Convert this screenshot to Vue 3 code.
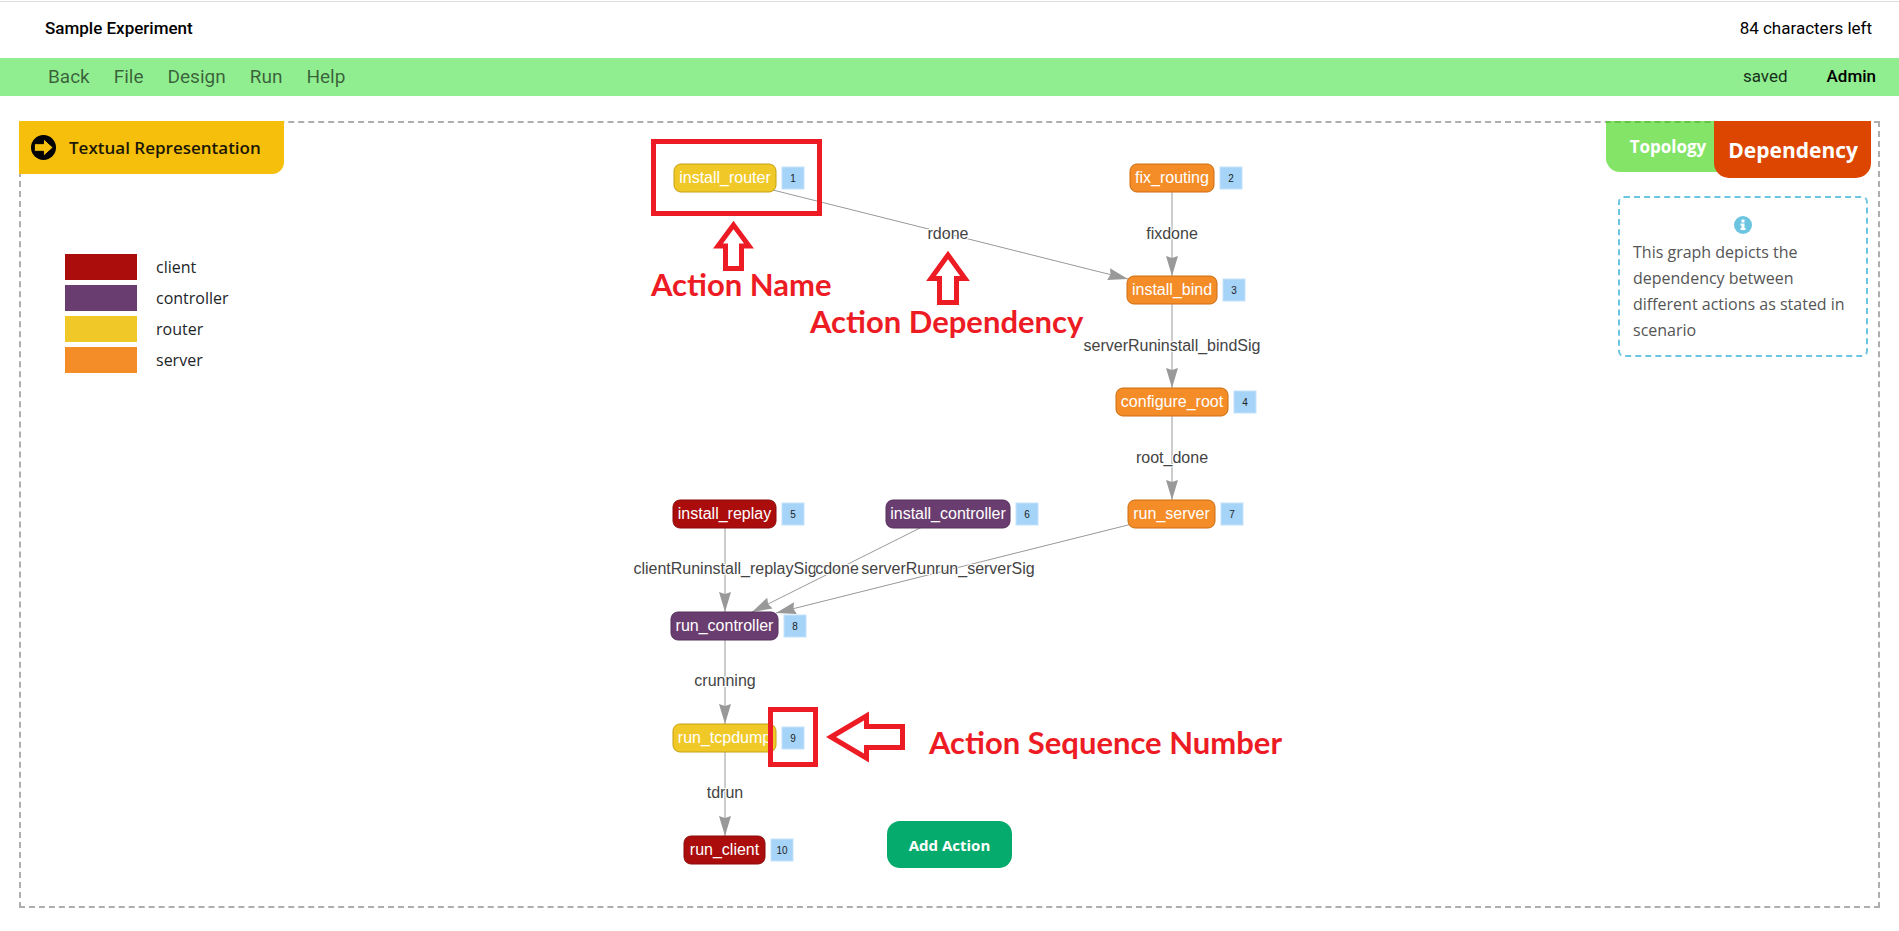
<script setup>
import { ref } from 'vue'

const title = ref('Sample Experiment')
const menu = ['Back', 'File', 'Design', 'Run', 'Help']

const roles = ['client', 'controller', 'router', 'server']

// Graph coordinates: x is the left edge of a node, row its level in the hierarchy.
const nodes = [
  { id: 1, name: 'install_router', role: 'router', x: 674, w: 102, row: 0 },
  { id: 2, name: 'fix_routing', role: 'server', x: 1130, w: 84, row: 0 },
  { id: 3, name: 'install_bind', role: 'server', x: 1127, w: 90, row: 1 },
  { id: 4, name: 'configure_root', role: 'server', x: 1116, w: 112, row: 2 },
  { id: 5, name: 'install_replay', role: 'client', x: 673, w: 103, row: 3 },
  { id: 6, name: 'install_controller', role: 'controller', x: 886, w: 124, row: 3 },
  { id: 7, name: 'run_server', role: 'server', x: 1128, w: 87, row: 3 },
  { id: 8, name: 'run_controller', role: 'controller', x: 671, w: 107, row: 4 },
  { id: 9, name: 'run_tcpdump', role: 'router', x: 673, w: 103, row: 5 },
  { id: 10, name: 'run_client', role: 'client', x: 684, w: 81, row: 6 },
]
const top = (row) => 164 + row * 112

const edges = [
  { from: [725, 178], to: [1128, 279], label: 'rdone', at: [948, 239] },
  { from: [1172, 178], to: [1172, 276], label: 'fixdone', at: [1172, 239] },
  { from: [1172, 290], to: [1172, 388], label: 'serverRuninstall_bindSig', at: [1172, 351] },
  { from: [1172, 402], to: [1172, 500], label: 'root_done', at: [1172, 463] },
  { from: [725, 514], to: [725, 612], label: 'clientRuninstall_replaySig', at: [725, 574] },
  { from: [948, 514], to: [752, 612], label: 'cdone', at: [837, 574] },
  { from: [1172, 514], to: [776, 613], label: 'serverRunrun_serverSig', at: [948, 574] },
  { from: [725, 626], to: [725, 724], label: 'crunning', at: [725, 686] },
  { from: [725, 738], to: [725, 836], label: 'tdrun', at: [725, 798] },
]
</script>

<template>
  <div class="page">
    <header class="top">
      <input v-model="title" class="title" aria-label="Experiment name" />
      <span class="left-count">84 characters left</span>
    </header>

    <nav class="menu">
      <a v-for="item in menu" :key="item" href="#" class="menu-link">{{ item }}</a>
      <span class="saved">saved</span>
      <a href="#" class="admin">Admin</a>
    </nav>

    <main class="panel">
      <section class="side">
        <button type="button" class="textual">
          <svg class="textual-icon" viewBox="0 0 26 26" aria-hidden="true">
            <circle cx="13" cy="13" r="13" />
            <path d="M3.500 9h9.500V4l10 9-10 9v-5H3.500z" />
          </svg>
          Textual Representation
        </button>
        <ul class="legend">
          <li v-for="role in roles" :key="role">
            <span class="swatch" :class="role"></span>{{ role }}
          </li>
        </ul>
      </section>

      <section class="canvas">
        <svg class="graph" viewBox="600 123 699 783" role="img" aria-label="Action dependency graph">
          <defs>
            <marker id="tip" markerUnits="userSpaceOnUse" markerWidth="22" markerHeight="14" refX="20" refY="7" orient="auto">
              <path d="M20 7L0 1l2 6-2 6z" fill="#999" />
            </marker>
          </defs>

          <line
            v-for="e in edges" :key="e.label" class="edge" marker-end="url(#tip)"
            :x1="e.from[0]" :y1="e.from[1]" :x2="e.to[0]" :y2="e.to[1]"
          />
          <text v-for="e in edges" :key="e.label" class="edge-label" :x="e.at[0]" :y="e.at[1]">{{ e.label }}</text>

          <g v-for="n in nodes" :key="n.id" :class="n.role">
            <rect class="node" :x="n.x" :y="top(n.row)" :width="n.w" height="28" rx="7" />
            <text class="node-label" :x="n.x + n.w / 2" :y="top(n.row) + 19">{{ n.name }}</text>
            <rect class="badge" :x="n.x + n.w + 6" :y="top(n.row) + 3" width="22" height="22" />
            <text class="badge-label" :x="n.x + n.w + 17" :y="top(n.row) + 18">{{ n.id }}</text>
          </g>

          <g class="marks">
            <path d="M653.5 141.5h166v72h-166z" />
            <path d="M770.5 709.5h45v55h-45z" />
            <path d="M733.5 225L749 246h-7.500v22.500h-16V246H718z" />
            <path d="M948 255l17 23.500h-8.500v24h-17v-24H931z" />
            <path d="M831 737l35.500-21v10.500h36v21h-36V758z" />
          </g>
          <text class="note" x="651" y="296">Action Name</text>
          <text class="note" x="810" y="333">Action Dependency</text>
          <text class="note" x="929" y="754">Action Sequence Number</text>
        </svg>
        <button type="button" class="add">Add Action</button>
      </section>

      <aside class="side right">
        <div class="tabs">
          <button type="button" class="tab">Topology</button>
          <button type="button" class="tab active">Dependency</button>
        </div>
        <div class="info">
          <svg class="info-icon" viewBox="0 0 18 18" aria-hidden="true">
            <circle cx="9" cy="9" r="9" fill="#6bc5e0" />
            <path d="M7.500 3.500h3v3h-3zM6.500 7.500h4v4.500h1v2h-5v-2h1V9.500h-1z" fill="#fff" />
          </svg>
          <p>This graph depicts the dependency between different actions as stated in scenario</p>
        </div>
      </aside>
    </main>
  </div>
</template>

<style>
body {
  background: #fff;
}
</style>

<style scoped>
.page {
  box-sizing: border-box;
  padding-top: 1px;
  font-family: 'Open Sans', 'Noto Sans', sans-serif;
}
button {
  border: 0;
  font-family: inherit;
  cursor: pointer;
}
.top {
  display: flex;
  align-items: center;
  justify-content: space-between;
  height: 56px;
  padding: 0 27px 0 45px;
  border-top: 1px solid #dcdcdc;
  font: 17px Roboto, sans-serif;
  color: #000;
}
.left-count,
.title {
  padding: 0 0 4px;
}
.title {
  width: 400px;
  border: 0;
  outline: 0;
  background: none;
  font: 500 17px Roboto, sans-serif;
  color: #000;
}
.menu {
  box-sizing: border-box;
  display: flex;
  align-items: center;
  gap: 24px;
  height: 38px;
  padding: 0 23px 2px 48px;
  background: #90ee90;
  font: 19px Roboto, sans-serif;
}
.menu-link {
  color: rgba(0, 0, 0, 0.6);
  text-decoration: none;
}
.saved {
  margin-left: auto;
  margin-right: 15px;
  font-size: 17px;
  color: #17301a;
}
.admin {
  font-size: 17px;
  font-weight: 500;
  color: #000;
  text-decoration: none;
}
.panel {
  display: grid;
  grid-template-columns: 1fr 699px 1fr;
  margin: 25px 19px 0;
  border: 2px dashed #aeaeae;
}
.textual {
  display: flex;
  align-items: center;
  gap: 13px;
  height: 53px;
  margin: -2px 0 0 -2px;
  padding: 0 23px 0 12px;
  border-radius: 0 0 12px 0;
  background: #f5bf0b;
  font-size: 17px;
  font-weight: 600;
  color: #1c1705;
}
.textual-icon {
  width: 25px;
  height: 25px;
}
.textual-icon path {
  fill: #f5bf0b;
  stroke: #000;
}
.legend {
  display: grid;
  gap: 5px;
  margin: 80px 0 0 44px;
  padding: 0;
  list-style: none;
  font-size: 16px;
  color: #212529;
}
.legend li {
  display: flex;
  align-items: center;
  gap: 19px;
  height: 26px;
}
.swatch {
  width: 72px;
  height: 26px;
  background: var(--fill);
}
.client {
  --fill: #ab0d0d;
  --line: #8c0a0a;
}
.controller {
  --fill: #6a3d70;
  --line: #55305a;
}
.router {
  --fill: #f0c929;
  --line: #c4a010;
}
.server {
  --fill: #f48c28;
  --line: #cc6c10;
}
.canvas {
  display: grid;
  justify-items: center;
}
.graph,
.add {
  grid-area: 1 / 1;
}
.graph {
  display: block;
  width: 699px;
  height: 783px;
}
.edge {
  stroke: #999;
  stroke-width: 1px;
}
.edge-label,
.node-label,
.badge-label {
  font-family: 'Liberation Sans', Arial, sans-serif;
  font-size: 16px;
  text-anchor: middle;
}
.edge-label {
  fill: #444;
  stroke: #fff;
  stroke-width: 2px;
  paint-order: stroke;
}
.node {
  fill: var(--fill);
  stroke: var(--line);
}
.node-label {
  fill: #fff;
}
.badge {
  fill: #a5d4f8;
  stroke: #c3e2fa;
}
.badge-label {
  font-size: 10px;
  fill: #222;
}
.marks {
  fill: none;
  stroke: #ed1c24;
  stroke-width: 5px;
}
.note {
  font: 700 31px Lato, sans-serif;
  fill: #ed1c24;
}
.add {
  align-self: end;
  height: 47px;
  margin-bottom: 38px;
  padding: 0 22px;
  border-radius: 13px;
  background: #05aa6d;
  font-size: 15px;
  font-weight: 700;
  color: #fff;
}
.right {
  display: flex;
  flex-direction: column;
  align-items: flex-end;
}
.tabs {
  display: flex;
  align-items: flex-start;
  margin: -2px 7px 0 0;
}
.tab {
  height: 51px;
  margin-right: -16px;
  padding: 0 24px;
  border-radius: 0 0 0 14px;
  background: rgba(50, 210, 3, 0.6);
  font-size: 17px;
  font-weight: 700;
  color: #fff;
}
.tab.active {
  height: 57px;
  margin-right: 0;
  padding: 0 13px 0 14px;
  border-radius: 0 0 15px 15px;
  background: #dc4600;
  font-size: 21px;
}
.info {
  box-sizing: border-box;
  width: 250px;
  margin: 18px 10px 0 0;
  padding: 18px 13px 12px;
  border: 2px dashed #6bc5e0;
  border-radius: 6px;
  font-size: 16px;
  line-height: 26px;
  color: #555;
}
.info-icon {
  display: block;
  width: 18px;
  height: 18px;
  margin: 0 auto 5px;
}
.info p {
  margin: 0;
}
</style>
